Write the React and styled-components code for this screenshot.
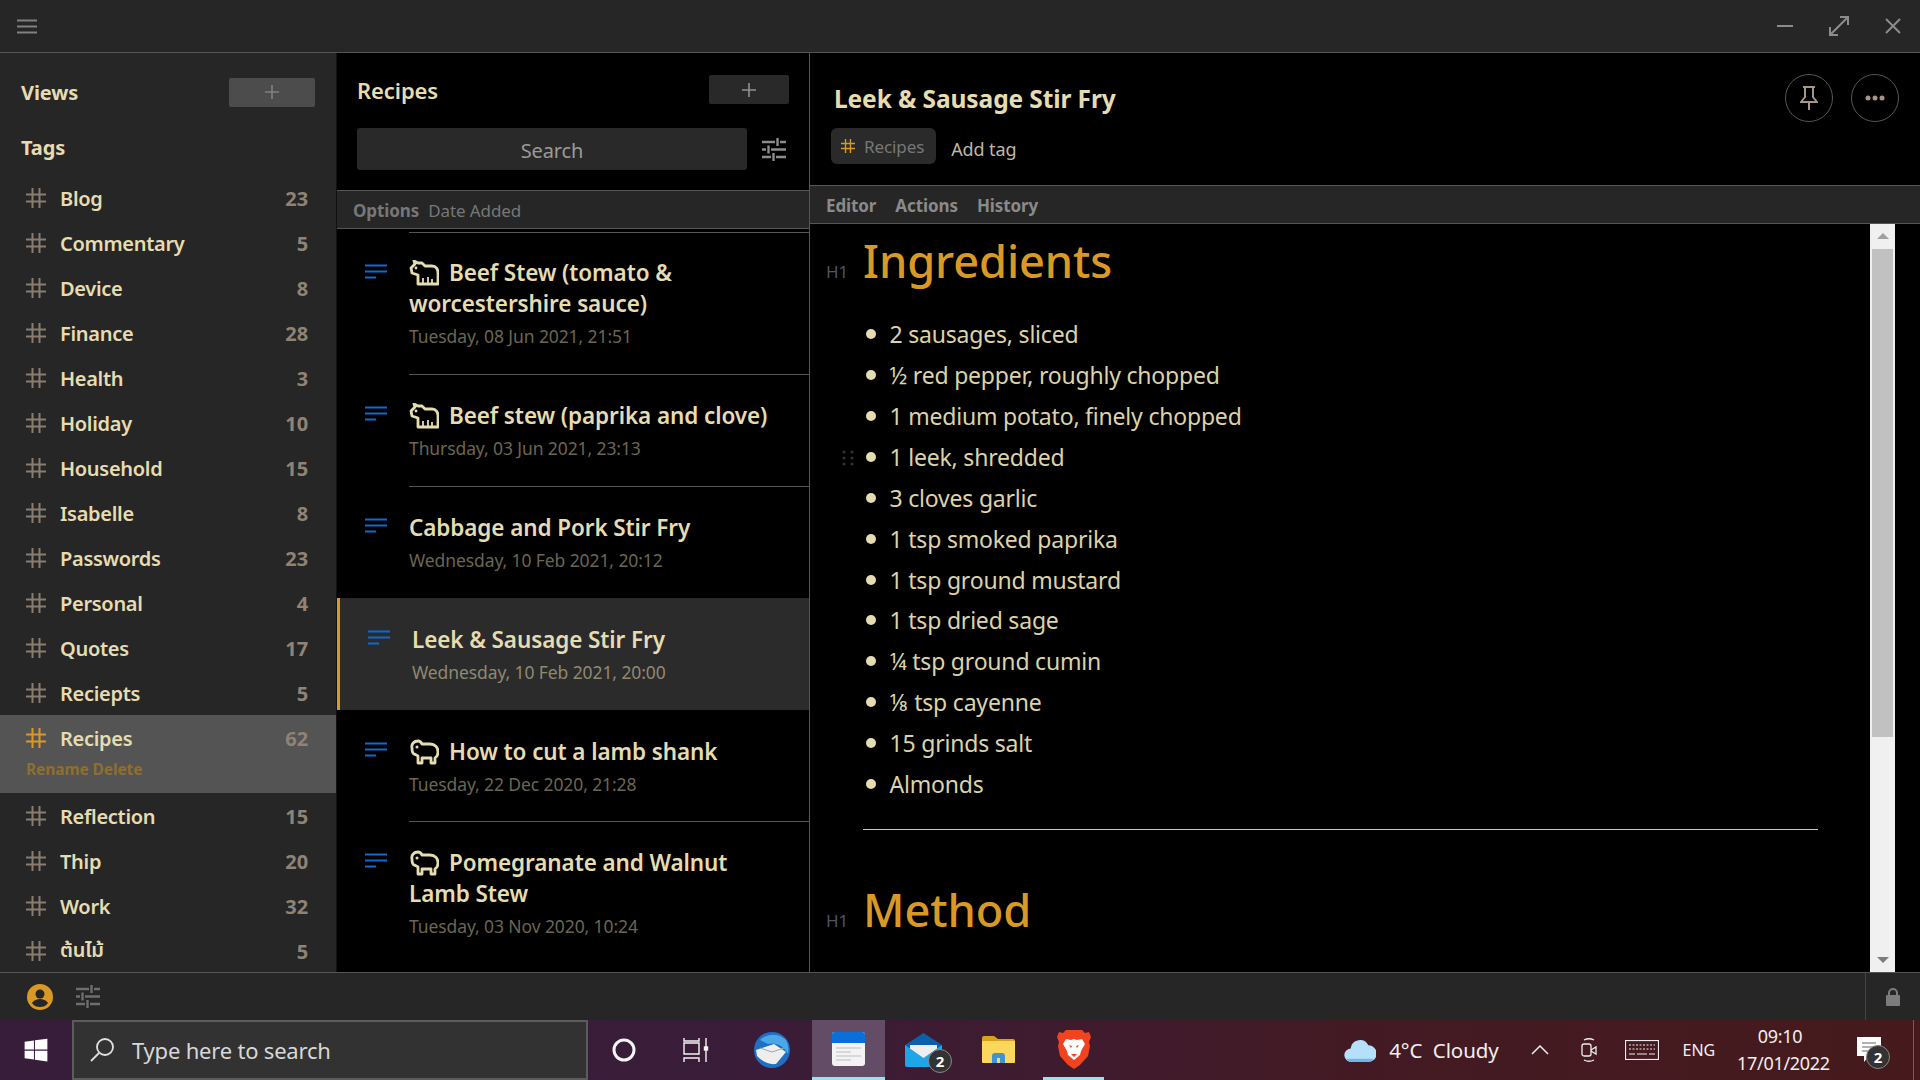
import React from 'react';
import styled, { createGlobalStyle } from 'styled-components';
import { FaWindows } from 'react-icons/fa';

const FONT = '"Noto Sans", "Open Sans", "Noto Sans Thai", "DejaVu Sans", sans-serif';
const CREAM = '#e6dcb2';
const ORANGE = '#d99a25';
const LINE = '#555555';
const DARK = '#262626';

const GlobalStyle = createGlobalStyle`
  html, body { margin: 0; padding: 0; background: #000; }
  body { font-family: ${FONT}; letter-spacing: -0.1px; }
  * { box-sizing: border-box; }
`;

const Page = styled.div`
  width: 1920px;
  height: 1080px;
  display: flex;
  flex-direction: column;
  overflow: hidden;
  background: #000;
  color: ${CREAM};
`;

const TitleBar = styled.div`
  height: 53px;
  flex: none;
  background: ${DARK};
  border-bottom: 1px solid ${LINE};
  display: flex;
  align-items: center;
  justify-content: space-between;
  padding: 0 12px 0 17px;
`;

const WindowButtons = styled.div`
  display: flex;
  align-items: center;
  gap: 28px;
`;

const Main = styled.div`
  flex: 1;
  min-height: 0;
  display: flex;
`;

const Sidebar = styled.div`
  width: 337px;
  flex: none;
  background: ${DARK};
  border-right: 1px solid #111;
  overflow: hidden;
`;

const SideHead = styled.div`
  display: flex;
  align-items: center;
  justify-content: space-between;
  height: 32px;
  margin: 23px 21px 0 21px;
  font-size: 20px;
  font-weight: 700;
`;

const SideTitle = styled.div`
  margin: 26px 0 13px 21px;
  font-size: 20px;
  line-height: 28px;
  font-weight: 700;
`;

const PlusButton = styled.div`
  width: ${(p) => p.$w}px;
  height: 29px;
  border-radius: 2px;
  background: ${(p) => p.$bg};
  display: flex;
  align-items: center;
  justify-content: center;
`;

const TagRow = styled.div`
  background: ${(p) => (p.$active ? '#545454' : 'transparent')};
  padding: ${(p) => (p.$active ? '9px 28px 12px 26px' : '0 28px 0 26px')};
  height: ${(p) => (p.$active ? '78px' : '45px')};
`;

const TagLine = styled.div`
  height: ${(p) => (p.$active ? '28px' : '45px')};
  display: flex;
  align-items: center;
`;

const TagName = styled.div`
  margin-left: 14px;
  padding-top: 1px;
  flex: 1;
  font-size: 20px;
  font-weight: 600;
  letter-spacing: -0.3px;
`;

const TagCount = styled.div`
  padding-top: 1px;
  font-size: 20px;
  font-weight: 700;
  color: #8f8376;
`;

const TagActions = styled.div`
  margin-top: 6px;
  font-size: 15.5px;
  font-weight: 700;
  color: #8e6f2d;
`;

const NotesPanel = styled.div`
  width: 473px;
  flex: none;
  background: #000;
  border-right: 1px solid ${LINE};
  display: flex;
  flex-direction: column;
  overflow: hidden;
`;

const NotesHead = styled.div`
  display: flex;
  align-items: center;
  justify-content: space-between;
  height: 29px;
  margin: 22px 20px 0 20px;
  font-size: 22px;
  font-weight: 600;
`;

const SearchRow = styled.div`
  display: flex;
  align-items: center;
  justify-content: space-between;
  margin: 24px 23px 20px 20px;
`;

const SearchBox = styled.div`
  width: 390px;
  height: 42px;
  border-radius: 3px;
  background: #292929;
  color: #9a9a9a;
  font-size: 20px;
  padding-top: 3px;
  display: flex;
  align-items: center;
  justify-content: center;
`;

const OptionsBar = styled.div`
  height: 39px;
  flex: none;
  background: ${DARK};
  border-top: 1px solid ${LINE};
  border-bottom: 1px solid ${LINE};
  display: flex;
  align-items: center;
  padding: 2px 0 0 16px;
  gap: 9px;
  font-size: 17px;
  color: #777;
`;

const OptionsLabel = styled.span`
  font-weight: 700;
`;

const NoteList = styled.div`
  flex: 1;
  min-height: 0;
  overflow: hidden;
  padding-top: 3px;
`;

const NoteRow = styled.div`
  height: ${(p) => p.$h}px;
  display: flex;
  background: ${(p) => (p.$active ? '#2b2b2b' : 'transparent')};
  border-left: ${(p) => (p.$active ? `3px solid ${ORANGE}` : '0 none')};
  padding-left: 28px;
`;

const NoteIcon = styled.div`
  width: 44px;
  flex: none;
  padding-top: 30px;
`;

const NoteBody = styled.div`
  flex: 1;
  min-width: 0;
  padding: ${(p) => p.$pad}px 24px 0 0;
  border-top: ${(p) => (p.$top ? `1px solid ${LINE}` : '0 none')};
`;

const NoteTitle = styled.div`
  font-size: 22.5px;
  line-height: 31px;
  font-weight: 600;
`;

const NoteDate = styled.div`
  margin-top: 5px;
  font-size: 17.5px;
  line-height: 24px;
  color: ${(p) => (p.$active ? '#8f8970' : '#6b6652')};
`;

const AnimalIcon = styled.svg`
  vertical-align: -5px;
  margin-right: 10px;
`;

const EditorPanel = styled.div`
  flex: 1;
  min-width: 0;
  display: flex;
  flex-direction: column;
`;

const EditorHead = styled.div`
  height: 132px;
  flex: none;
  position: relative;
  padding: 27px 0 0 24px;
`;

const NoteHeading = styled.div`
  font-size: 24.5px;
  line-height: 38px;
  font-weight: 700;
`;

const ChipRow = styled.div`
  display: flex;
  align-items: center;
  gap: 15px;
  margin: 10px 0 0 -3px;
`;

const Chip = styled.div`
  height: 36px;
  padding: 0 12px 0 10px;
  border-radius: 6px;
  background: #2a2a2a;
  display: flex;
  align-items: center;
  gap: 9px;
  font-size: 17px;
  color: #777;
`;

const AddTag = styled.div`
  font-size: 18px;
  color: #bdb9a6;
  padding-top: 6px;
`;

const RoundButtons = styled.div`
  position: absolute;
  top: 21px;
  right: 21px;
  display: flex;
  gap: 18px;
`;

const RoundButton = styled.div`
  width: 48px;
  height: 48px;
  border-radius: 50%;
  border: 1px solid #555;
  display: flex;
  align-items: center;
  justify-content: center;
`;

const TabsBar = styled.div`
  height: 39px;
  flex: none;
  background: ${DARK};
  border-top: 1px solid ${LINE};
  border-bottom: 1px solid ${LINE};
  display: flex;
  align-items: center;
  gap: 19px;
  padding: 1px 0 0 16px;
  font-size: 17px;
  font-weight: 700;
  color: #8a8a8a;
`;

const EditorBody = styled.div`
  flex: 1;
  min-height: 0;
  display: flex;
`;

const Doc = styled.div`
  flex: 1;
  min-width: 0;
  overflow: hidden;
  padding: 0 52px 0 16px;
`;

const HeadingRow = styled.div`
  display: flex;
  align-items: baseline;
  height: ${(p) => p.$h}px;
  padding-top: ${(p) => p.$pad}px;
`;

const HeadingMark = styled.div`
  width: 37px;
  flex: none;
  font-size: 17px;
  color: #4a5566;
`;

const Heading = styled.div`
  font-size: 45.2px;
  line-height: 60px;
  font-weight: 500;
  color: ${ORANGE};
`;

const Bullets = styled.div`
  padding: 21px 0 0 37px;
`;

const BulletRow = styled.div`
  height: 40.86px;
  display: flex;
  align-items: center;
  position: relative;
  font-size: 23px;
  letter-spacing: -0.2px;
  color: #dcd3ab;
`;

const Dot = styled.span`
  width: 10px;
  height: 10px;
  border-radius: 50%;
  background: ${CREAM};
  margin: 0 13.5px 0 3px;
  flex: none;
`;

const DragDots = styled.svg`
  position: absolute;
  left: -21px;
  top: 13px;
`;

const Rule = styled.div`
  height: 1px;
  background: #c8c8c8;
  margin: 25px 0 0 37px;
`;

const ScrollTrack = styled.div`
  width: 25px;
  flex: none;
  margin-right: 25px;
  background: #f0f0f0;
  display: flex;
  flex-direction: column;
  align-items: center;
  justify-content: space-between;
  position: relative;
`;

const ScrollThumb = styled.div`
  position: absolute;
  top: 25px;
  left: 2px;
  right: 2px;
  height: 488px;
  background: #c1c1c1;
`;

const Arrow = styled.div`
  width: 0;
  height: 0;
  margin: 9px 0;
  border-left: 6px solid transparent;
  border-right: 6px solid transparent;
  ${(p) => (p.$down ? 'border-top: 6px solid #7c7c7c;' : 'border-bottom: 6px solid #a0a0a0;')}
`;

const BottomBar = styled.div`
  height: 48px;
  flex: none;
  background: ${DARK};
  border-top: 1px solid ${LINE};
  display: flex;
  align-items: center;
  padding-left: 27px;
  gap: 23px;
`;

const LockCell = styled.div`
  margin-left: auto;
  width: 55px;
  height: 100%;
  border-left: 1px solid #444;
  display: flex;
  align-items: center;
  justify-content: center;
`;

const Taskbar = styled.div`
  height: 60px;
  flex: none;
  display: flex;
  align-items: center;
  background: linear-gradient(90deg, #371d3a 0%, #3a1c38 40%, #431a24 70%, #461a1c 100%);
  color: #fff;
`;

const StartButton = styled.div`
  width: 72px;
  display: flex;
  justify-content: center;
  flex: none;
`;

const TaskSearch = styled.div`
  width: 516px;
  height: 60px;
  flex: none;
  background: #323232;
  border: 2px solid #5c5c5c;
  display: flex;
  align-items: center;
  gap: 17px;
  padding-left: 15px;
  font-size: 22px;
  letter-spacing: -0.2px;
  color: #d8d8d8;
`;

const TaskIcon = styled.div`
  width: ${(p) => p.$w}px;
  height: 60px;
  flex: none;
  margin-left: ${(p) => p.$ml || 0}px;
  display: flex;
  align-items: center;
  justify-content: center;
  position: relative;
  background: ${(p) => (p.$open ? '#634d66' : 'transparent')};
  border-bottom: ${(p) => (p.$line ? '3px solid #96e4ea' : '0 none')};
`;

const Badge = styled.div`
  position: absolute;
  right: ${(p) => p.$r}px;
  bottom: ${(p) => p.$b}px;
  width: 24px;
  height: 24px;
  border-radius: 50%;
  background: #333;
  border: 1px solid #888;
  color: #fff;
  font-size: 15px;
  font-weight: 700;
  display: flex;
  align-items: center;
  justify-content: center;
`;

const Tray = styled.div`
  margin-left: auto;
  display: flex;
  align-items: center;
  height: 60px;
  padding-right: 39px;
  position: relative;
`;

const DesktopEdge = styled.div`
  position: absolute;
  top: 0;
  right: 6px;
  bottom: 0;
  width: 1px;
  background: #7a5a5c;
`;

const TrayText = styled.div`
  font-size: ${(p) => p.$size}px;
  color: #f0f0f0;
  margin-left: ${(p) => p.$ml}px;
`;

const Clock = styled.div`
  margin-left: 22px;
  width: 86px;
  text-align: center;
  font-size: 18px;
  line-height: 27px;
  color: #f0f0f0;
  letter-spacing: -0.3px;
`;

const TrayIcon = styled.div`
  margin-left: ${(p) => p.$ml}px;
  display: flex;
  position: relative;
`;

const HashIcon = ({ color = '#8a7d70', size = 20 }) => (
  <svg width={size} height={size} viewBox="0 0 20 20" fill="none" stroke={color} strokeWidth="2">
    <path d="M6.5 0v20M13.5 0v20M0 6.5h20M0 13.5h20" />
  </svg>
);

const Plus = ({ color }) => (
  <svg width="14" height="14" viewBox="0 0 14 14" stroke={color} strokeWidth="1.6">
    <path d="M7 0v14M0 7h14" />
  </svg>
);

const Sliders = ({ color }) => (
  <svg width="24" height="23" viewBox="0 0 24 23" fill="none" stroke={color} strokeWidth="2.4">
    <path d="M0 4h13M18 4h6M15.5 0v8M0 11.5h4M9 11.5h15M6.5 7.5v8M0 19h9M14 19h10M11.5 15v8" />
  </svg>
);

const NoteLines = () => (
  <svg width="22" height="15" viewBox="0 0 22 15" stroke="#0a6bd6" strokeWidth="2.2">
    <path d="M0 1.5h22M0 7.5h22M0 13.5h11" />
  </svg>
);

const Cow = () => (
  <AnimalIcon width="30" height="26" viewBox="0 0 30 26" fill="none" stroke={CREAM} strokeWidth="2.8" strokeLinejoin="round">
    <path d="M2 8L6 4 5 1l4 2h4l3 3h7c4 0 6 3 6 7v11H9V15l-3-1-3-1z" />
    <path d="M14 24v-6M19 24v-7M23 24v-5" strokeWidth="1.8" />
    <circle cx="7" cy="8" r="1.400" fill={CREAM} stroke="none" />
  </AnimalIcon>
);

const Sheep = () => (
  <AnimalIcon width="30" height="26" viewBox="0 0 30 26" fill="none" stroke={CREAM} strokeWidth="2.8" strokeLinejoin="round">
    <path d="M3 9C2 5 5 2 9 2c2 0 3 1 4 3h8c5 0 8 3 8 8 0 3-1 5-3 6v5h-4v-5h-9v5H9v-7c-2-1-3-2-4-2-2-1-2-3-2-6z" />
    <circle cx="8" cy="8" r="1.500" fill={CREAM} stroke="none" />
  </AnimalIcon>
);

const Brave = () => (
  <svg width="34" height="40" viewBox="0 0 34 40">
    <path d="M9 1h16l3 3 4-1 2 5-2 5 1 4-2 10-8 9-6 4-6-4-8-9-2-10 1-4-2-5 2-5 4 1z" fill="#f0431e" />
    <path d="M9 10l5 1 3-1 3 1 5-1 3 5-4 7-1 4-6 5-6-5-1-4-4-7z" fill="#fff" />
    <path d="M12 16l3 1-1 2zM22 16l-3 1 1 2zM14 25h6l-3 3z" fill="#f0431e" />
  </svg>
);

const Thunderbird = () => (
  <svg width="36" height="36" viewBox="0 0 36 36">
    <circle cx="18" cy="18" r="18" fill="#1f6fc4" />
    <path d="M6 8c6-6 18-8 26 0 2 4 3 8 2 14-4-8-12-12-20-10z" fill="#4aa8e8" />
    <path d="M2 18l18-6 12 8-10 12c-8 1-14-3-19-8z" fill="#eeeeee" />
    <path d="M6 16l12 4 12-4" fill="none" stroke="#9aa" strokeWidth="1" />
  </svg>
);

const NotesApp = () => (
  <svg width="33" height="34" viewBox="0 0 33 34">
    <rect width="33" height="34" rx="3" fill="#f3f3f3" />
    <path d="M0 11V3a3 3 0 0 1 3-3h27a3 3 0 0 1 3 3v8z" fill="#0a6fd8" />
    <path d="M4 16h25M4 20h15M4 24h25M4 28h15" stroke="#d8d8d8" strokeWidth="2" />
  </svg>
);

const MailApp = () => (
  <svg width="37" height="34" viewBox="0 0 37 34">
    <path d="M0 12L18.500 0 37 12v20a2 2 0 0 1-2 2H2a2 2 0 0 1-2-2z" fill="#0c5fa8" />
    <path d="M5 12h27v9L18.500 28 5 21z" fill="#eeeeee" />
    <path d="M0 12l18.500 13L37 12v20a2 2 0 0 1-2 2H2a2 2 0 0 1-2-2z" fill="#1ea6e8" />
  </svg>
);

const FolderApp = () => (
  <svg width="33" height="28" viewBox="0 0 33 28">
    <path d="M0 2a2 2 0 0 1 2-2h10l4 3h15a2 2 0 0 1 2 2v4H0z" fill="#d9a21c" />
    <rect y="5" width="33" height="22" rx="1" fill="#fbd75b" />
    <path d="M10 27v-7a3 3 0 0 1 3-3h7a3 3 0 0 1 3 3v7h-5v-5h-3v5z" fill="#3f93d2" />
  </svg>
);

const TAGS = [
  ['Blog', 23], ['Commentary', 5], ['Device', 8], ['Finance', 28], ['Health', 3], ['Holiday', 10],
  ['Household', 15], ['Isabelle', 8], ['Passwords', 23], ['Personal', 4], ['Quotes', 17], ['Reciepts', 5],
  ['Recipes', 62, true], ['Reflection', 15], ['Thip', 20], ['Work', 32], ['ต้นไม้', 5],
];

const NOTES = [
  { title: 'Beef Stew (tomato & worcestershire sauce)', date: 'Tuesday, 08 Jun 2021, 21:51', h: 142, pad: 24, icon: 'cow', top: true },
  { title: 'Beef stew (paprika and clove)', date: 'Thursday, 03 Jun 2021, 23:13', h: 112, pad: 25, icon: 'cow', top: true },
  { title: 'Cabbage and Pork Stir Fry', date: 'Wednesday, 10 Feb 2021, 20:12', h: 112, pad: 25, top: true },
  { title: 'Leek & Sausage Stir Fry', date: 'Wednesday, 10 Feb 2021, 20:00', h: 112, pad: 26, active: true },
  { title: 'How to cut a lamb shank', date: 'Tuesday, 22 Dec 2020, 21:28', h: 111, pad: 26, icon: 'sheep' },
  { title: 'Pomegranate and Walnut Lamb Stew', date: 'Tuesday, 03 Nov 2020, 10:24', h: 143, pad: 25, icon: 'sheep', top: true },
];

const INGREDIENTS = [
  '2 sausages, sliced', '½ red pepper, roughly chopped', '1 medium potato, finely chopped', '1 leek, shredded',
  '3 cloves garlic', '1 tsp smoked paprika', '1 tsp ground mustard', '1 tsp dried sage', '¼ tsp ground cumin',
  '⅛ tsp cayenne', '15 grinds salt', 'Almonds',
];

export default function App() {
  return (
    <Page>
      <GlobalStyle />
      <TitleBar>
        <svg width="20" height="15" viewBox="0 0 20 15" stroke="#808080" strokeWidth="2">
          <path d="M0 1.500h20M0 7.500h20M0 13.500h20" />
        </svg>
        <WindowButtons>
          <svg width="30" height="20" viewBox="0 0 30 20" stroke="#8c8c8c" strokeWidth="2">
            <path d="M7 10h16" />
          </svg>
          <svg width="22" height="22" viewBox="0 0 22 22" fill="none" stroke="#8c8c8c" strokeWidth="2">
            <path d="M2 20L20 2M12 2h8v8M2 12v8h8" />
          </svg>
          <svg width="30" height="20" viewBox="0 0 30 20" stroke="#8c8c8c" strokeWidth="2">
            <path d="M8 3l14 14M22 3L8 17" />
          </svg>
        </WindowButtons>
      </TitleBar>
      <Main>
        <Sidebar>
          <SideHead>
            Views
            <PlusButton $w={86} $bg="#4c4c4c"><Plus color="#808080" /></PlusButton>
          </SideHead>
          <SideTitle>Tags</SideTitle>
          {TAGS.map(([name, count, active]) => (
            <TagRow key={name} $active={active}>
              <TagLine $active={active}>
                <HashIcon color={active ? ORANGE : '#8a7d70'} />
                <TagName>{name}</TagName>
                <TagCount>{count}</TagCount>
              </TagLine>
              {active && <TagActions>Rename Delete</TagActions>}
            </TagRow>
          ))}
        </Sidebar>
        <NotesPanel>
          <NotesHead>
            <span>Recipes</span>
            <PlusButton $w={80} $bg="#292929"><Plus color="#909090" /></PlusButton>
          </NotesHead>
          <SearchRow>
            <SearchBox>Search</SearchBox>
            <Sliders color="#8c8c8c" />
          </SearchRow>
          <OptionsBar>
            <OptionsLabel>Options</OptionsLabel>
            <span>Date Added</span>
          </OptionsBar>
          <NoteList>
            {NOTES.map((n) => (
              <NoteRow key={n.title} $h={n.h} $active={n.active}>
                <NoteIcon><NoteLines /></NoteIcon>
                <NoteBody $pad={n.pad} $top={n.top}>
                  <NoteTitle>
                    {n.icon === 'cow' && <Cow />}
                    {n.icon === 'sheep' && <Sheep />}
                    {n.title}
                  </NoteTitle>
                  <NoteDate $active={n.active}>{n.date}</NoteDate>
                </NoteBody>
              </NoteRow>
            ))}
          </NoteList>
        </NotesPanel>
        <EditorPanel>
          <EditorHead>
            <NoteHeading>Leek &amp; Sausage Stir Fry</NoteHeading>
            <ChipRow>
              <Chip><HashIcon color={ORANGE} size={14} />Recipes</Chip>
              <AddTag>Add tag</AddTag>
            </ChipRow>
            <RoundButtons>
              <RoundButton>
                <svg width="18" height="24" viewBox="0 0 18 24" fill="none" stroke="#a69686" strokeWidth="2">
                  <path d="M3 1h12M5 1v10l-4 5h16l-4-5V1M9 16v8" />
                </svg>
              </RoundButton>
              <RoundButton>
                <svg width="20" height="6" viewBox="0 0 20 6" fill="#a69686">
                  <circle cx="3" cy="3" r="2.500" />
                  <circle cx="10" cy="3" r="2.500" />
                  <circle cx="17" cy="3" r="2.500" />
                </svg>
              </RoundButton>
            </RoundButtons>
          </EditorHead>
          <TabsBar>
            <span>Editor</span>
            <span>Actions</span>
            <span>History</span>
          </TabsBar>
          <EditorBody>
            <Doc>
              <HeadingRow $h={69} $pad={7}>
                <HeadingMark>H1</HeadingMark>
                <Heading>Ingredients</Heading>
              </HeadingRow>
              <Bullets>
                {INGREDIENTS.map((item, i) => (
                  <BulletRow key={item}>
                    {i === 3 && (
                      <DragDots width="12" height="16" viewBox="0 0 12 16" fill="#2c3038">
                        {[2, 8, 14].map((y) => (
                          <g key={y}>
                            <circle cx="2" cy={y} r="1.600" />
                            <circle cx="10" cy={y} r="1.600" />
                          </g>
                        ))}
                      </DragDots>
                    )}
                    <Dot />
                    {item}
                  </BulletRow>
                ))}
              </Bullets>
              <Rule />
              <HeadingRow $h={80} $pad={50}>
                <HeadingMark>H1</HeadingMark>
                <Heading>Method</Heading>
              </HeadingRow>
            </Doc>
            <ScrollTrack>
              <Arrow />
              <ScrollThumb />
              <Arrow $down />
            </ScrollTrack>
          </EditorBody>
        </EditorPanel>
      </Main>
      <BottomBar>
        <svg width="26" height="26" viewBox="0 0 26 26">
          <circle cx="13" cy="13" r="13" fill={ORANGE} />
          <circle cx="13" cy="10" r="4.500" fill={DARK} />
          <path d="M5 19c2-3 5-4 8-4s6 1 8 4c-2 3-5 4-8 4s-6-1-8-4z" fill={DARK} />
        </svg>
        <Sliders color="#6e6e6e" />
        <LockCell>
          <svg width="14" height="18" viewBox="0 0 14 18">
            <path d="M3 8V5a4 4 0 0 1 8 0v3" fill="none" stroke="#7c7c7c" strokeWidth="2" />
            <rect y="7" width="14" height="11" rx="1" fill="#7c7c7c" />
          </svg>
        </LockCell>
      </BottomBar>
      <Taskbar>
        <StartButton><FaWindows size={26} color="#fff" /></StartButton>
        <TaskSearch>
          <svg width="26" height="26" viewBox="0 0 26 26" fill="none" stroke="#e0e0e0" strokeWidth="1.800">
            <circle cx="16" cy="10" r="8" />
            <path d="M10 16L2 24" />
          </svg>
          Type here to search
        </TaskSearch>
        <TaskIcon $w={72}>
          <svg width="24" height="24" viewBox="0 0 24 24" fill="none" stroke="#f4f4f4" strokeWidth="3">
            <circle cx="12" cy="12" r="10" />
          </svg>
        </TaskIcon>
        <TaskIcon $w={72}>
          <svg width="26" height="24" viewBox="0 0 26 24" fill="none" stroke="#f4f4f4" strokeWidth="1.400">
            <path d="M1 0v3h15V0M1 5h15v11H1zM1 24v-4h15v4M23 0v24" />
            <rect x="21.500" y="9" width="3" height="3" fill="#f4f4f4" />
          </svg>
        </TaskIcon>
        <TaskIcon $w={80}><Thunderbird /></TaskIcon>
        <TaskIcon $w={73} $open $line><NotesApp /></TaskIcon>
        <TaskIcon $w={76}>
          <MailApp />
          <Badge $r={9} $b={7}>2</Badge>
        </TaskIcon>
        <TaskIcon $w={74}><FolderApp /></TaskIcon>
        <TaskIcon $w={61} $ml={8} $line><Brave /></TaskIcon>
        <Tray>
          <svg width="32" height="25" viewBox="0 0 30 24">
            <path d="M7 23a6.500 6.500 0 0 1-1-13 9 9 0 0 1 17-3 7 7 0 0 1 0 16z" fill="#b6e0fa" />
            <path d="M7 23h16a7 7 0 0 0 5-3H2a6 6 0 0 0 5 3z" fill="#6fb6e8" />
          </svg>
          <TrayText $size={20.5} $ml={13}>4°C&nbsp; Cloudy</TrayText>
          <TrayIcon $ml={32}>
            <svg width="18" height="10" viewBox="0 0 18 10" fill="none" stroke="#eee" strokeWidth="1.500">
              <path d="M1 9l8-8 8 8" />
            </svg>
          </TrayIcon>
          <TrayIcon $ml={32}>
            <svg width="16" height="24" viewBox="0 0 16 24" fill="none" stroke="#eee" strokeWidth="1.300">
              <rect x="1" y="6" width="9" height="12" rx="2" />
              <path d="M10 12l5-3v7l-5-3M3 2c3-1.500 7-1.500 10 0M3 22c3 1.500 7 1.500 10 0" />
            </svg>
          </TrayIcon>
          <TrayIcon $ml={28}>
            <svg width="34" height="20" viewBox="0 0 34 20" fill="none" stroke="#eee" strokeWidth="1.200">
              <rect x="0.500" y="0.500" width="33" height="19" />
              <path d="M4 5h26M4 9h26" strokeDasharray="2 1.500" />
              <path d="M4 14h6M12 14h10M24 14h6" />
            </svg>
          </TrayIcon>
          <TrayText $size={16} $ml={24}>ENG</TrayText>
          <Clock>09:10<br />17/01/2022</Clock>
          <TrayIcon $ml={34}>
            <svg width="24" height="26" viewBox="0 0 24 26">
              <path d="M0 0h24v19H12l-5 6v-6H0z" fill="#fff" />
              <path d="M5 6h14M5 10h14M5 14h9" stroke="#666" strokeWidth="1.200" />
            </svg>
            <Badge $r={-9} $b={-6}>2</Badge>
          </TrayIcon>
          <DesktopEdge />
        </Tray>
      </Taskbar>
    </Page>
  );
}
